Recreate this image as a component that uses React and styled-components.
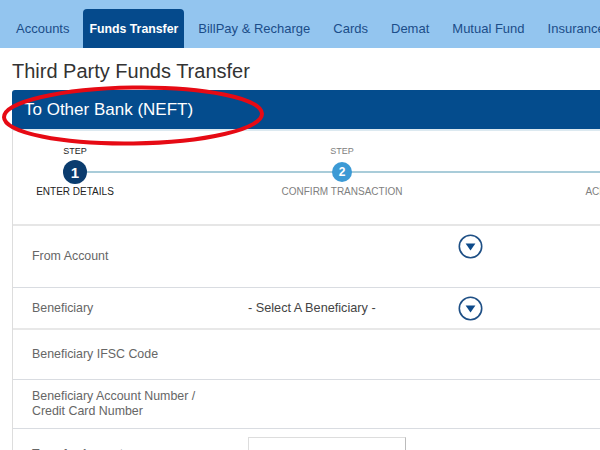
import React from 'react';
import styled, { createGlobalStyle } from 'styled-components';

const GlobalStyle = createGlobalStyle`
  body {
    margin: 0;
    background: #fff;
    font-family: "Liberation Sans", Arial, sans-serif;
  }
`;

const Page = styled.div`
  position: relative;
  width: 600px;
  height: 450px;
  overflow: hidden;
  background: #fff;
`;

const NavBar = styled.nav`
  display: flex;
  align-items: flex-end;
  gap: 5px;
  height: 48px;
  padding-left: 7px;
  background: #93c5ef;
`;

const NavTab = styled.div`
  display: flex;
  align-items: center;
  height: 39px;
  padding: 0 ${(p) => (p.$active ? 6 : 9)}px;
  border-radius: 4px 4px 0 0;
  font-size: ${(p) => (p.$active ? 12.3 : 13)}px;
  white-space: nowrap;
  color: ${(p) => (p.$active ? '#fff' : '#1b4d89')};
  background: ${(p) => (p.$active ? '#054a8c' : 'transparent')};
  font-weight: ${(p) => (p.$active ? 'bold' : 'normal')};
`;

const Content = styled.div`
  padding-left: 12px;
`;

const Title = styled.h1`
  margin: 11px 0 7px;
  font-size: 20px;
  line-height: 24px;
  font-weight: normal;
  color: #333;
`;

const PanelHeader = styled.div`
  display: flex;
  align-items: center;
  height: 39px;
  padding-left: 12px;
  border-radius: 3px 0 0 0;
  background: #044c8d;
  color: #fff;
  font-size: 17px;
`;

const PanelBody = styled.div`
  border-left: 1px solid #dddddd;
  border-top: 2px solid #dce9f0;
`;

const Stepper = styled.div`
  padding: 14px 0 26px;
  border-bottom: 2px solid #e6e6e6;
`;

const StepRow = styled.div`
  position: relative;
  display: flex;
  &::before {
    content: '';
    position: absolute;
    top: 26px;
    left: 62px;
    right: 0;
    height: 2px;
    background: #a9ccd9;
  }
`;

const Step = styled.div`
  position: relative;
  z-index: 1;
  display: flex;
  flex-direction: column;
  align-items: center;
  flex: 0 0 124px;
  margin-left: ${(p) => p.$offset}px;
  color: ${(p) => (p.$current ? '#222' : '#808080')};
`;

const StepCaption = styled.div`
  height: 12px;
  font-size: 9px;
  line-height: 12px;
`;

const CircleSlot = styled.div`
  display: flex;
  align-items: center;
  justify-content: center;
  height: 24px;
  margin: 3px 0 2px;
`;

const StepCircle = styled.div`
  display: flex;
  align-items: center;
  justify-content: center;
  width: ${(p) => (p.$current ? 24 : 20)}px;
  height: ${(p) => (p.$current ? 24 : 20)}px;
  border-radius: 50%;
  background: ${(p) => (p.$current ? '#0b3c6e' : '#3c9ad5')};
  color: #fff;
  font-weight: bold;
  font-size: ${(p) => (p.$current ? 15 : 12)}px;
`;

const StepLabel = styled.div`
  font-size: 10px;
  line-height: 12px;
  white-space: nowrap;
`;

const FormRow = styled.div`
  display: grid;
  grid-template-columns: 235px 1fr;
  align-items: center;
  height: ${(p) => p.$h}px;
  border-bottom: ${(p) => (p.$thick ? '2px solid #e8e8e8' : '1px solid #d9dce1')};
`;

const Label = styled.div`
  padding-left: 19px;
  font-size: 12.4px;
  line-height: 15px;
  color: #666;
`;

const Field = styled.div`
  display: flex;
  align-items: center;
  align-self: ${(p) => (p.$top ? 'start' : 'center')};
  margin-top: ${(p) => (p.$top ? 8 : 0)}px;
`;

const SelectText = styled.div`
  width: 210px;
  font-size: 12.7px;
  color: #444;
  white-space: nowrap;
`;

const AmountInput = styled.div`
  align-self: start;
  margin-top: 8px;
  width: 156px;
  height: 30px;
  border: 1px solid #ddd;
  border-right-color: #bbb;
`;

const Overlay = styled.svg`
  position: absolute;
  top: 0;
  left: 0;
  pointer-events: none;
`;

function DropIcon() {
  return (
    <svg width="25" height="25" viewBox="0 0 25 25">
      <circle cx="12.5" cy="12.5" r="11.2" fill="#fff" stroke="#1e4f85" strokeWidth="1.6" />
      <path d="M7.6 9.6 H17.4 L12.5 16.6 Z" fill="#0d4a8a" />
    </svg>
  );
}

const tabs = ['Accounts', 'Funds Transfer', 'BillPay & Recharge', 'Cards', 'Demat', 'Mutual Fund', 'Insurance'];

const steps = [
  { n: 1, label: 'ENTER DETAILS', offset: 0 },
  { n: 2, label: 'CONFIRM TRANSACTION', offset: 143 },
  { n: 3, label: 'ACKNOWLEDGEMENT', offset: 173 }
];

export default function App() {
  return (
    <Page>
      <GlobalStyle />
      <NavBar>
        {tabs.map((t) => (
          <NavTab key={t} $active={t === 'Funds Transfer'}>
            {t}
          </NavTab>
        ))}
      </NavBar>
      <Content>
        <Title>Third Party Funds Transfer</Title>
        <PanelHeader>To Other Bank (NEFT)</PanelHeader>
        <PanelBody>
          <Stepper>
            <StepRow>
              {steps.map((s) => (
                <Step key={s.n} $offset={s.offset} $current={s.n === 1}>
                  <StepCaption>STEP</StepCaption>
                  <CircleSlot>
                    <StepCircle $current={s.n === 1}>{s.n}</StepCircle>
                  </CircleSlot>
                  <StepLabel>{s.label}</StepLabel>
                </Step>
              ))}
            </StepRow>
          </Stepper>
          <FormRow $h={61}>
            <Label>From Account</Label>
            <Field $top>
              <SelectText />
              <DropIcon />
            </Field>
          </FormRow>
          <FormRow $h={40} $thick>
            <Label>Beneficiary</Label>
            <Field>
              <SelectText>- Select A Beneficiary -</SelectText>
              <DropIcon />
            </Field>
          </FormRow>
          <FormRow $h={49}>
            <Label>Beneficiary IFSC Code</Label>
            <div />
          </FormRow>
          <FormRow $h={48}>
            <Label>
              Beneficiary Account Number /<br />
              Credit Card Number
            </Label>
            <div />
          </FormRow>
          <FormRow $h={50}>
            <Label>Transfer Amount</Label>
            <AmountInput />
          </FormRow>
        </PanelBody>
      </Content>
      <Overlay width="600" height="450">
        <ellipse
          cx="133"
          cy="115.5"
          rx="129"
          ry="28"
          fill="none"
          stroke="#e60a14"
          strokeWidth="4"
          transform="rotate(-0.8 133 115.5)"
        />
      </Overlay>
    </Page>
  );
}
